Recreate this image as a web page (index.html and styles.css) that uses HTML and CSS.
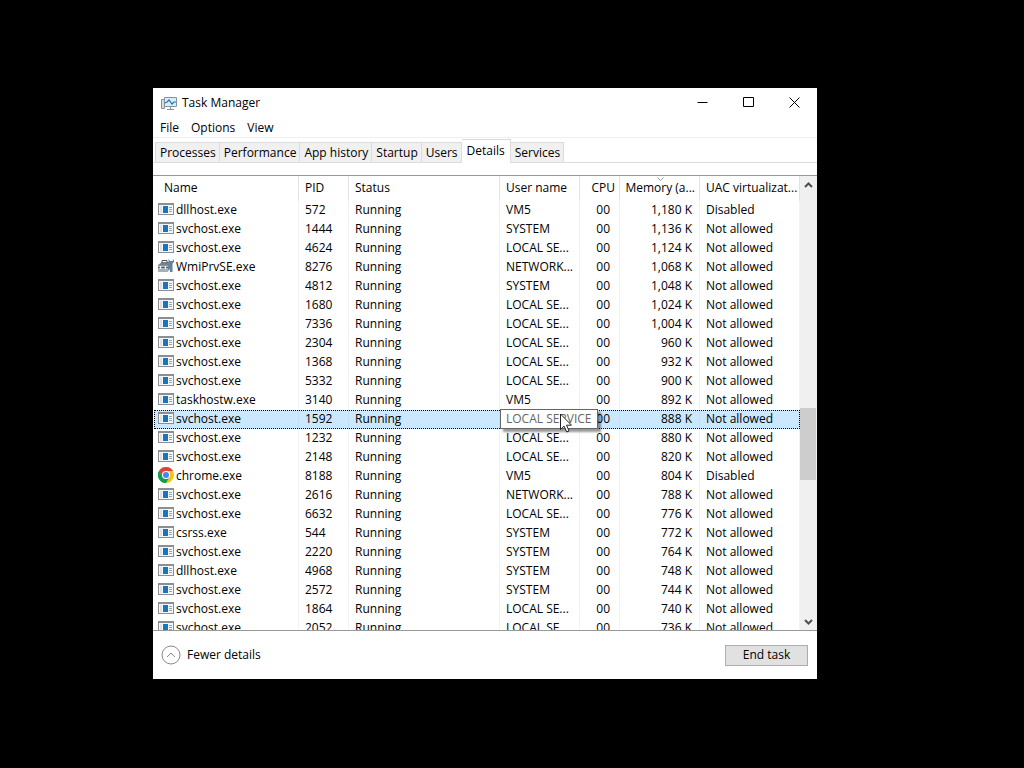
FILE: index.html
```html
<!DOCTYPE html>
<html lang="en">
<head>
<meta charset="utf-8">
<title>Task Manager</title>
<link rel="stylesheet" href="styles.css">
</head>
<body>
<svg class="sprite" aria-hidden="true">
  <symbol id="app" viewBox="0 0 16 14">
    <rect x="0.5" y="1.5" width="15" height="11" fill="#f4f6f8" stroke="#8b8f94"/>
    <rect x="0" y="1" width="16" height="2" fill="#8b8f94"/>
    <rect x="2" y="4" width="2" height="7" fill="#dfe3e6"/>
    <rect x="5" y="4" width="5" height="7" fill="#1b75bb"/>
    <path d="M11 5.5h3M11 7.5h3M11 9.5h3" stroke="#9aa3ab"/>
  </symbol>
  <symbol id="wmi" viewBox="0 0 16 14">
    <path d="M0 6l4-3h8v7l-3 3H0z" fill="#75828c"/>
    <path d="M0 6.500h10V13H0z" fill="#a4b0ba"/>
    <path d="M4 4V1.500h5V4M0 8.500h10" fill="none" stroke="#4d5860"/>
    <path d="M2.500 7v3M7.500 7v3" stroke="#eef2f4" stroke-width="1.500"/>
    <path d="M10.500 0v3l1.500 1.500V13h2.500V4.500L16 3V0l-1.500 2H12z" fill="#5b83a8"/>
  </symbol>
  <symbol id="chrome" viewBox="0 0 16 16">
    <circle cx="8" cy="8" r="8" fill="#fbc116"/>
    <path d="M8 8L1.070 4A8 8 0 0 1 14.930 4H8z" fill="#db4437"/>
    <path d="M1.070 4A8 8 0 0 0 8 16L11.460 10L8 8L4.540 10z" fill="#109d58"/>
    <path d="M1.070 4L4.540 10L8 8V4z" fill="#db4437"/>
    <path d="M1.070 4L4.540 10L8 12L8 16A8 8 0 0 1 1.070 4z" fill="#109d58"/>
    <circle cx="8" cy="8" r="4" fill="#fff"/>
    <circle cx="8" cy="8" r="3" fill="#4285f4"/>
  </symbol>
</svg>

<main class="window">
  <header class="titlebar">
    <svg class="logo" viewBox="0 0 16 16" aria-hidden="true">
      <path d="M0.500 4.500h3v9h-3z" fill="#d5d9dc" stroke="#8c9296"/>
      <path d="M3.500 2.500h12v9h-12z" fill="#d9eefa" stroke="#87949c"/>
      <path d="M4 8l2-1 2-2 3 4 2-2h2" fill="none" stroke="#2176b5" stroke-width="1.200"/>
      <path d="M9.500 12v2M6 14.500h7" stroke="#87949c"/>
    </svg>
    <h1 class="title">Task Manager</h1>
    <div class="controls">
      <button class="control" aria-label="Minimize"><svg viewBox="0 0 11 11"><path d="M0.500 5.500h10"/></svg></button>
      <button class="control" aria-label="Maximize"><svg viewBox="0 0 11 11"><path d="M0.500 0.500h10v9h-10z"/></svg></button>
      <button class="control" aria-label="Close"><svg viewBox="0 0 11 11"><path d="M0.500 0.500l10 10M10.500 0.500l-10 10"/></svg></button>
    </div>
  </header>

  <nav class="menu">
    <button class="menu-item">File</button>
    <button class="menu-item">Options</button>
    <button class="menu-item">View</button>
  </nav>

  <div class="tabs" role="tablist">
    <button class="tab" role="tab">Processes</button>
    <button class="tab" role="tab">Performance</button>
    <button class="tab" role="tab">App history</button>
    <button class="tab" role="tab">Startup</button>
    <button class="tab" role="tab">Users</button>
    <button class="tab active" role="tab" aria-selected="true">Details</button>
    <button class="tab" role="tab">Services</button>
  </div>

  <section class="list">
    <div class="viewport">
      <table class="grid">
        <colgroup>
          <col class="c-name"><col class="c-pid"><col class="c-status"><col class="c-user"><col class="c-cpu"><col class="c-mem"><col>
        </colgroup>
        <thead>
          <tr><th class="first">Name</th><th>PID</th><th>Status</th><th>User name</th><th class="num">CPU</th><th class="num sorted">Memory (a...<svg class="sort" viewBox="0 0 7 4" aria-hidden="true"><path d="M0.500 0.500l3 3 3-3"/></svg></th><th>UAC virtualizat...</th></tr>
        </thead>
        <tbody>
          <tr><td><svg class="icon"><use href="#app"/></svg>dllhost.exe</td><td>572</td><td>Running</td><td>VM5</td><td>00</td><td>1,180 K</td><td>Disabled</td></tr>
          <tr><td><svg class="icon"><use href="#app"/></svg>svchost.exe</td><td>1444</td><td>Running</td><td>SYSTEM</td><td>00</td><td>1,136 K</td><td>Not allowed</td></tr>
          <tr><td><svg class="icon"><use href="#app"/></svg>svchost.exe</td><td>4624</td><td>Running</td><td>LOCAL SE...</td><td>00</td><td>1,124 K</td><td>Not allowed</td></tr>
          <tr><td><svg class="icon"><use href="#wmi"/></svg>WmiPrvSE.exe</td><td>8276</td><td>Running</td><td>NETWORK...</td><td>00</td><td>1,068 K</td><td>Not allowed</td></tr>
          <tr><td><svg class="icon"><use href="#app"/></svg>svchost.exe</td><td>4812</td><td>Running</td><td>SYSTEM</td><td>00</td><td>1,048 K</td><td>Not allowed</td></tr>
          <tr><td><svg class="icon"><use href="#app"/></svg>svchost.exe</td><td>1680</td><td>Running</td><td>LOCAL SE...</td><td>00</td><td>1,024 K</td><td>Not allowed</td></tr>
          <tr><td><svg class="icon"><use href="#app"/></svg>svchost.exe</td><td>7336</td><td>Running</td><td>LOCAL SE...</td><td>00</td><td>1,004 K</td><td>Not allowed</td></tr>
          <tr><td><svg class="icon"><use href="#app"/></svg>svchost.exe</td><td>2304</td><td>Running</td><td>LOCAL SE...</td><td>00</td><td>960 K</td><td>Not allowed</td></tr>
          <tr><td><svg class="icon"><use href="#app"/></svg>svchost.exe</td><td>1368</td><td>Running</td><td>LOCAL SE...</td><td>00</td><td>932 K</td><td>Not allowed</td></tr>
          <tr><td><svg class="icon"><use href="#app"/></svg>svchost.exe</td><td>5332</td><td>Running</td><td>LOCAL SE...</td><td>00</td><td>900 K</td><td>Not allowed</td></tr>
          <tr><td><svg class="icon"><use href="#app"/></svg>taskhostw.exe</td><td>3140</td><td>Running</td><td>VM5</td><td>00</td><td>892 K</td><td>Not allowed</td></tr>
          <tr class="selected"><td><svg class="icon"><use href="#app"/></svg>svchost.exe</td><td>1592</td><td>Running</td><td class="hovered"><span class="tooltip" role="tooltip">LOCAL SERVICE</span><svg class="pointer" viewBox="0 0 12 20" aria-hidden="true"><path d="M0.500 1v15.500l3.600-3.400 2.600 5.900 2.400-1-2.600-5.800h5z"/></svg></td><td>00</td><td>888 K</td><td>Not allowed</td></tr>
          <tr><td><svg class="icon"><use href="#app"/></svg>svchost.exe</td><td>1232</td><td>Running</td><td>LOCAL SE...</td><td>00</td><td>880 K</td><td>Not allowed</td></tr>
          <tr><td><svg class="icon"><use href="#app"/></svg>svchost.exe</td><td>2148</td><td>Running</td><td>LOCAL SE...</td><td>00</td><td>820 K</td><td>Not allowed</td></tr>
          <tr><td><svg class="icon"><use href="#chrome"/></svg>chrome.exe</td><td>8188</td><td>Running</td><td>VM5</td><td>00</td><td>804 K</td><td>Disabled</td></tr>
          <tr><td><svg class="icon"><use href="#app"/></svg>svchost.exe</td><td>2616</td><td>Running</td><td>NETWORK...</td><td>00</td><td>788 K</td><td>Not allowed</td></tr>
          <tr><td><svg class="icon"><use href="#app"/></svg>svchost.exe</td><td>6632</td><td>Running</td><td>LOCAL SE...</td><td>00</td><td>776 K</td><td>Not allowed</td></tr>
          <tr><td><svg class="icon"><use href="#app"/></svg>csrss.exe</td><td>544</td><td>Running</td><td>SYSTEM</td><td>00</td><td>772 K</td><td>Not allowed</td></tr>
          <tr><td><svg class="icon"><use href="#app"/></svg>svchost.exe</td><td>2220</td><td>Running</td><td>SYSTEM</td><td>00</td><td>764 K</td><td>Not allowed</td></tr>
          <tr><td><svg class="icon"><use href="#app"/></svg>dllhost.exe</td><td>4968</td><td>Running</td><td>SYSTEM</td><td>00</td><td>748 K</td><td>Not allowed</td></tr>
          <tr><td><svg class="icon"><use href="#app"/></svg>svchost.exe</td><td>2572</td><td>Running</td><td>SYSTEM</td><td>00</td><td>744 K</td><td>Not allowed</td></tr>
          <tr><td><svg class="icon"><use href="#app"/></svg>svchost.exe</td><td>1864</td><td>Running</td><td>LOCAL SE...</td><td>00</td><td>740 K</td><td>Not allowed</td></tr>
          <tr><td><svg class="icon"><use href="#app"/></svg>svchost.exe</td><td>2052</td><td>Running</td><td>LOCAL SE...</td><td>00</td><td>736 K</td><td>Not allowed</td></tr>
        </tbody>
      </table>
    </div>
    <div class="scrollbar">
      <button class="arrow" aria-label="Scroll up"><svg viewBox="0 0 9 6"><path d="M1 5l3.500-3.500L8 5"/></svg></button>
      <div class="track"><div class="thumb"></div></div>
      <button class="arrow" aria-label="Scroll down"><svg viewBox="0 0 9 6"><path d="M1 1l3.500 3.500L8 1"/></svg></button>
    </div>
  </section>

  <footer class="footer">
    <button class="fewer">
      <svg class="circle" viewBox="0 0 20 20" aria-hidden="true"><circle cx="10" cy="10" r="9"/><path d="M6 12l4-4 4 4"/></svg>
      Fewer details
    </button>
    <button class="end-task">End task</button>
  </footer>
</main>
</body>
</html>
```

FILE: styles.css
```css
* { box-sizing: border-box; }

body {
  margin: 0;
  height: 100vh;
  padding: 88px 207px 89px 153px;
  background: #000;
  color: #000;
  font: 12px/18px "Open Sans", "Noto Sans", sans-serif;
  overflow: hidden;
}

button {
  margin: 0;
  padding: 0;
  border: 0;
  background: none;
  color: inherit;
  font: inherit;
  white-space: nowrap;
}

svg { display: block; }
.sprite { position: absolute; width: 0; height: 0; }

.window {
  display: flex;
  flex-direction: column;
  height: 100%;
  background: #fff;
}

.titlebar {
  display: flex;
  align-items: center;
  height: 29px;
  padding-left: 8px;
}
.logo { width: 16px; height: 16px; margin-right: 5px; }
.title { margin: 0; font: inherit; }
.controls { display: flex; margin-left: auto; }
.control { display: grid; place-items: center; width: 46px; height: 29px; }
.control svg { width: 11px; height: 11px; fill: none; stroke: #000; }

.menu {
  display: flex;
  align-items: flex-end;
  gap: 12px;
  height: 21px;
  padding-left: 7px;
  border-bottom: 1px solid #f0f0f0;
}

.tabs {
  display: flex;
  align-items: flex-end;
  height: 25px;
  padding-left: 2px;
  border-bottom: 1px solid #dcdcdc;
}
.tab {
  height: 20px;
  padding: 0 3px 0 4px;
  background: #f0f0f0;
  border: 1px solid #dcdcdc;
  border-bottom: 0;
  border-left: 0;
}
.tab:first-child { border-left: 1px solid #dcdcdc; }
.tab.active {
  height: 24px;
  margin-bottom: -1px;
  padding: 0 5px 1px;
  background: #fff;
}

.list {
  display: flex;
  flex: 1;
  min-height: 0;
  margin-top: 12px;
  border-top: 1px solid #999;
  border-bottom: 1px solid #999;
}
.viewport { flex: 1; min-width: 0; padding: 0 0 0 1px; overflow: hidden; }

.grid { width: 100%; table-layout: fixed; border-collapse: separate; border-spacing: 0; }
.c-name { width: 145px; }
.c-pid { width: 50px; }
.c-status { width: 151px; }
.c-user { width: 80px; }
.c-cpu { width: 40px; }
.c-mem { width: 80px; }

th, td {
  padding: 0 6px;
  border-right: 1px solid #f3f3f3;
  text-align: left;
  font-weight: 400;
  white-space: nowrap;
}
th { height: 25px; padding-bottom: 2px; border-color: #e3e3e3; }
td { height: 19px; line-height: 18px; vertical-align: top; }
th.first { padding-left: 10px; }
th.num { padding-right: 4px; padding-left: 4px; text-align: right; }
td:first-child { padding-left: 4px; }
td:nth-child(5), td:nth-child(6) { padding-right: 7px; padding-left: 0; text-align: right; }
td:nth-child(5) { padding-right: 9px; }
.icon { float: left; width: 16px; height: 16px; margin: 0 2px 0 0; }

.sorted { position: relative; }
.sort {
  position: absolute;
  top: 1px;
  left: 37px;
  width: 7px;
  height: 4px;
  fill: none;
  stroke: #999;
}

.selected { background: #cce8ff; outline: 1px dotted #000; outline-offset: -1px; }
.selected td { border-color: #c4e0f7; }
.hovered { position: relative; }
.tooltip {
  position: absolute;
  z-index: 1;
  top: -1px;
  left: 0;
  padding: 0 5px;
  border: 1px solid #666;
  background: #fff;
  color: #666;
  line-height: 18px;
  box-shadow: 3px 3px 2px #0006;
}
.pointer {
  position: absolute;
  z-index: 2;
  top: 3px;
  left: 60px;
  width: 12px;
  height: 20px;
  fill: #fff;
  stroke: #222;
}

.scrollbar { display: flex; flex-direction: column; width: 17px; padding-right: 1px; background: #f0f0f0; }
.arrow { display: grid; place-items: center; height: 17px; }
.arrow svg { width: 9px; height: 6px; fill: none; stroke: #505050; stroke-width: 2; }
.track { display: flex; flex-direction: column; flex: 1; padding-top: 215px; }
.thumb { height: 72px; background: #cdcdcd; }

.footer {
  display: flex;
  align-items: center;
  justify-content: space-between;
  height: 48px;
  padding: 0 9px 0 8px;
}
.fewer { display: flex; align-items: center; gap: 6px; }
.circle { width: 20px; height: 20px; fill: none; stroke: #888; }
.end-task { width: 83px; height: 21px; border: 1px solid #adadad; background: #e1e1e1; }
```
